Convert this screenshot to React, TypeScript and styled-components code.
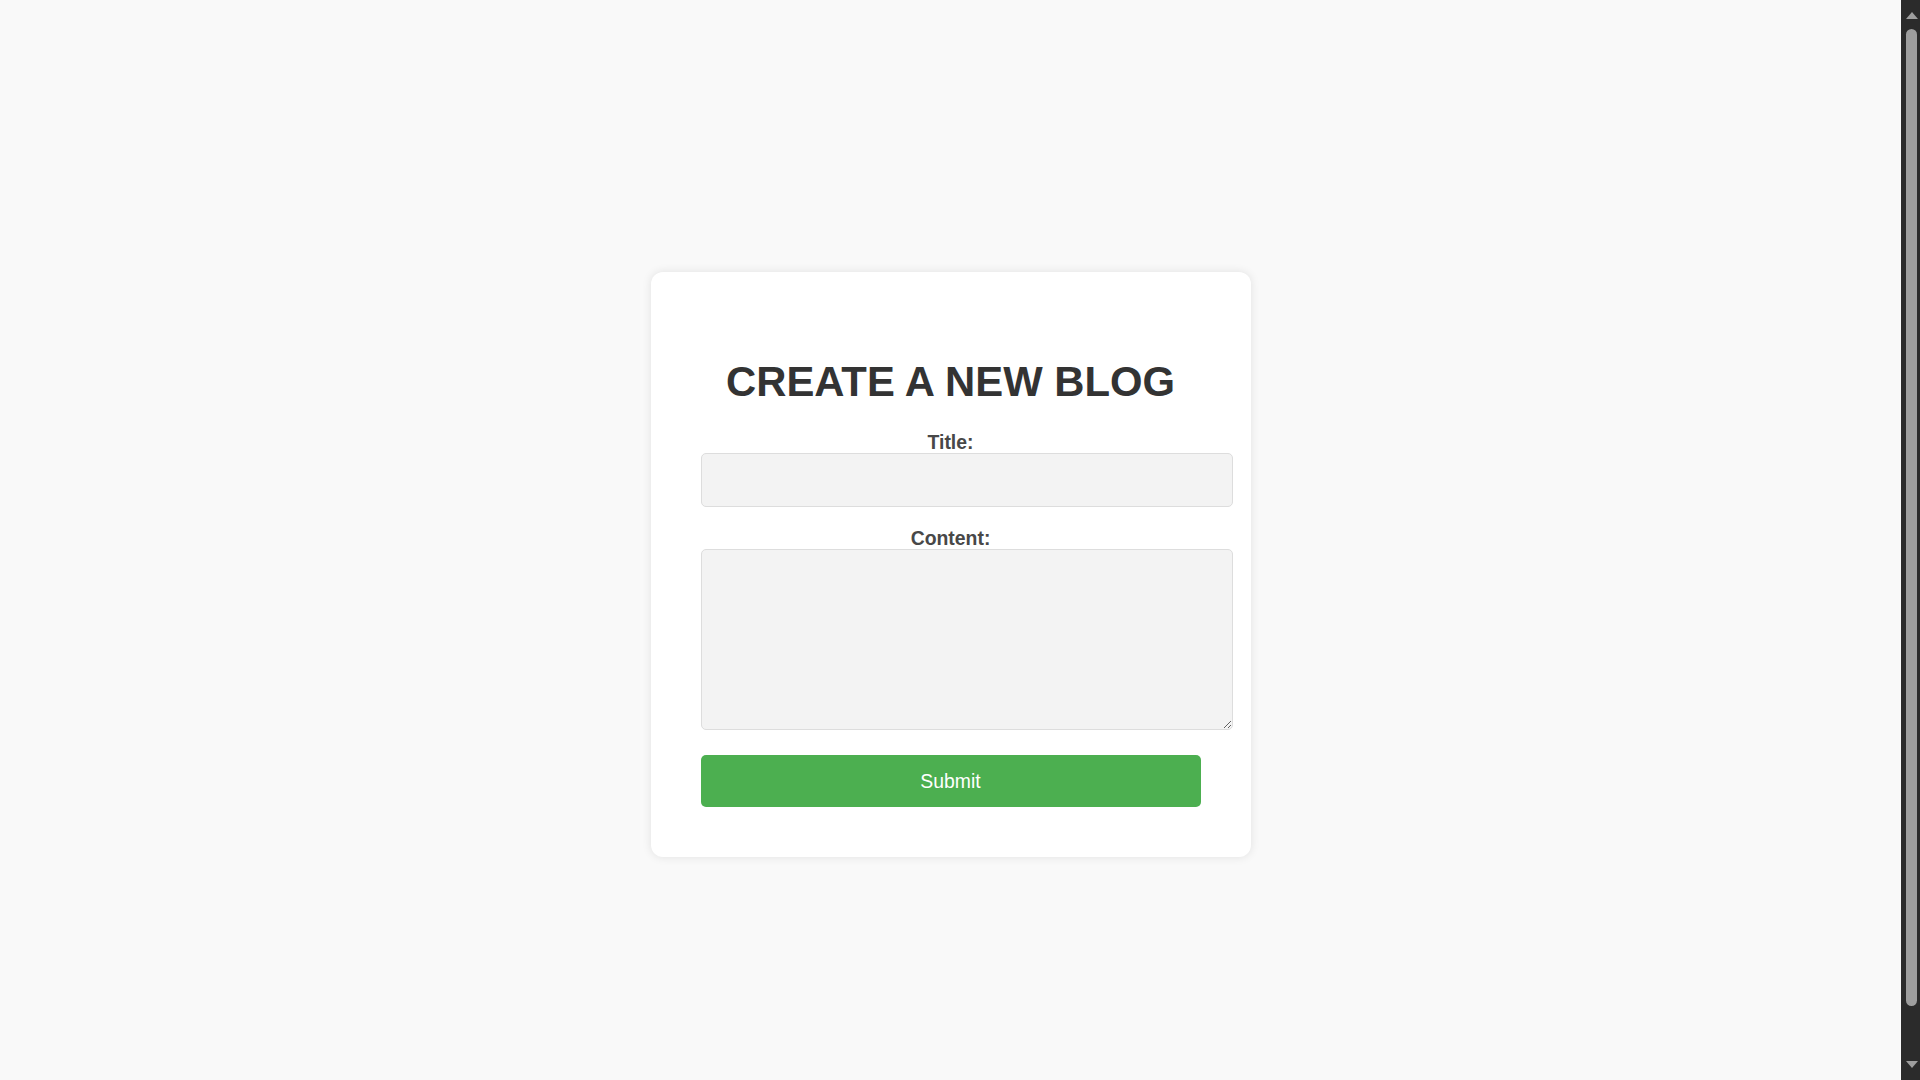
import React from "react";
import styled, { createGlobalStyle } from "styled-components";

const GlobalStyle = createGlobalStyle`
  body {
    margin: 0;
    padding: 24px 44px 26px 25px;
    min-height: 100vh;
    background: #f9f9f9;
    font-family: "Liberation Sans", Arial, sans-serif;
    color: #333;
    display: flex;
    align-items: center;
    justify-content: center;
  }
  #root {
    display: flex;
    justify-content: center;
    width: 100%;
  }
`;

const Card = styled.div`
  width: 500px;
  padding: 50px;
  background: #ffffff;
  border-radius: 12px;
  box-shadow: 0 0 10px rgba(0, 0, 0, 0.1);
`;

const Heading = styled.h1`
  margin: 36px 0 25px;
  text-align: center;
  font-size: 41.8px;
  font-weight: 700;
  text-transform: uppercase;
  color: #333;
  line-height: normal;
`;

const Form = styled.form`
  display: flex;
  flex-direction: column;
  align-items: flex-start;
`;

const Label = styled.label`
  display: block;
  width: 100%;
  text-align: center;
  font-size: 19.4px;
  font-weight: 700;
  color: #484848;
  line-height: 22px;
`;

const fieldBase = `
  box-sizing: content-box;
  width: 100%;
  padding: 15px;
  border: 1px solid #ddd;
  border-radius: 5px;
  background: #f3f3f3;
  font-family: "Liberation Sans", Arial, sans-serif;
  font-size: 19.2px;
  line-height: 22px;
  color: #333;
  outline: none;
  display: block;
`;

const TextInput = styled.input`
  ${fieldBase}
  height: 22px;
  margin: 0 0 20px;
`;

const TextArea = styled.textarea`
  ${fieldBase}
  height: 149px;
  margin: 0 0 25px;
  resize: vertical;
`;

const SubmitButton = styled.button`
  box-sizing: border-box;
  width: 100%;
  padding: 15px;
  border: none;
  border-radius: 5px;
  background: #4caf50;
  color: #ffffff;
  font-family: "Liberation Sans", Arial, sans-serif;
  font-size: 19.4px;
  line-height: 22px;
  cursor: pointer;
`;

/* Drawing of the window's scrollbar, which lies over the page edge */
const ScrollTrack = styled.div`
  position: fixed;
  top: 0;
  right: 0;
  width: 19px;
  height: 100vh;
  background: #2b2b2b;
  display: flex;
  flex-direction: column;
  align-items: center;
`;

const ArrowBox = styled.div<{ $top: number }>`
  box-sizing: border-box;
  height: 25px;
  width: 100%;
  padding-top: ${(p) => p.$top}px;
  display: flex;
  align-items: flex-start;
  justify-content: center;
`;

const Thumb = styled.div`
  flex: 1;
  width: 11px;
  margin: 4px 0 49px 2px;
  border-radius: 6px;
  background: #9e9e9e;
`;

const Arrow = ({ down }: { down?: boolean }) => (
  <svg width="12" height="7" viewBox="0 0 12 7" style={{ marginLeft: 2 }}>
    <polygon
      points={down ? "0,0 12,0 6,7" : "6,0 12,7 0,7"}
      fill="#9e9e9e"
    />
  </svg>
);

export default function App() {
  return (
    <>
      <GlobalStyle />
      <Card>
        <Heading>Create a New Blog</Heading>
        <Form onSubmit={(e) => e.preventDefault()}>
          <Label htmlFor="title">Title:</Label>
          <TextInput id="title" type="text" />
          <Label htmlFor="content">Content:</Label>
          <TextArea id="content" />
          <SubmitButton type="submit">Submit</SubmitButton>
        </Form>
      </Card>
      <ScrollTrack>
        <ArrowBox $top={12}>
          <Arrow />
        </ArrowBox>
        <Thumb />
        <ArrowBox $top={6}>
          <Arrow down />
        </ArrowBox>
      </ScrollTrack>
    </>
  );
}
